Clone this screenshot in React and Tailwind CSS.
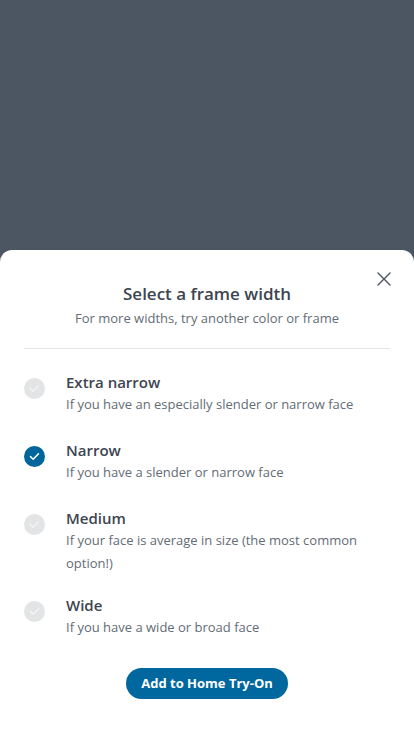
import React from "react";

const items = [
  { t: "Extra narrow", d: "If you have an especially slender or narrow face", on: false, mt: "" },
  { t: "Narrow", d: "If you have a slender or narrow face", on: true, mt: "mt-[23px]" },
  { t: "Medium", d: "If your face is average in size (the most common option!)", on: false, mt: "mt-[23px]" },
  { t: "Wide", d: "If you have a wide or broad face", on: false, mt: "mt-[19px]" },
];

function Check({ on }) {
  return (
    <div
      className={`mt-[7px] flex h-[21px] w-[21px] shrink-0 items-center justify-center rounded-full ${
        on ? "bg-[#00659b]" : "bg-[#e3e4e5]"
      }`}
    >
      <svg width="11" height="9" viewBox="0 0 11 9" fill="none">
        <path d="M1.5 4.6 L4.2 7.2 L9.5 1.8" stroke={on ? "#ffffff" : "#f4f4f4"} strokeWidth="1.5" strokeLinecap="round" strokeLinejoin="round" />
      </svg>
    </div>
  );
}

export default function App() {
  return (
    <div className="flex h-[736px] w-[414px] flex-col bg-[#4c5562]" style={{ fontFamily: "'Open Sans', 'Liberation Sans', sans-serif" }}>
      <div className="flex-1" />
      <div className="relative rounded-t-[12px] bg-white px-[24px] pb-[37px] pt-[32px]">
        <button className="absolute right-[23px] top-[22px] p-0">
          <svg width="14" height="14" viewBox="0 0 14 14" fill="none">
            <path d="M1 1 L13 13 M13 1 L1 13" stroke="#4b5460" strokeWidth="1.4" strokeLinecap="round" />
          </svg>
        </button>
        <div className="text-center text-[17px] font-semibold leading-[24px] text-[#3d4550]">Select a frame width</div>
        <div className="mt-[2px] text-center text-[13px] leading-[20px] text-[#646c76]">For more widths, try another color or frame</div>
        <div className="mt-[20px] h-px bg-[#e3e5e8]" />
        <div className="mt-[22px] flex flex-col">
          {items.map((it) => (
            <div key={it.t} className={`flex gap-[21px] ${it.mt}`}>
              <Check on={it.on} />
              <div className="flex-1 pr-[20px]">
                <div className="text-[15px] font-semibold leading-[22px] text-[#3d4550]">{it.t}</div>
                <div className="text-[13px] leading-[23px] text-[#646c76]">{it.d}</div>
              </div>
            </div>
          ))}
        </div>
        <div className="mt-[29px] flex justify-center">
          <button className="h-[31px] w-[162px] rounded-full bg-[#00689e] text-[13px] font-bold text-white">Add to Home Try-On</button>
        </div>
      </div>
    </div>
  );
}
